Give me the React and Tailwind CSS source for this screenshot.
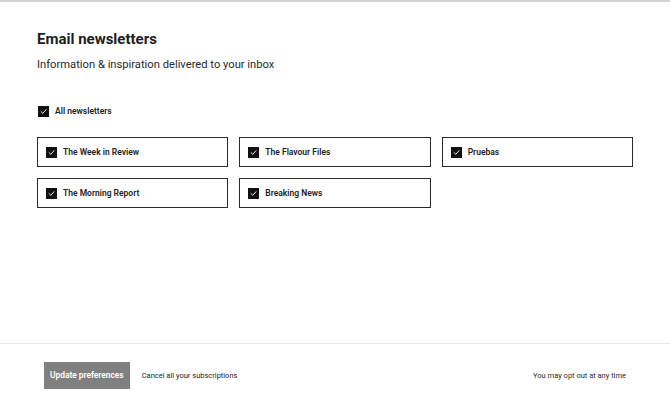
import React, { useState } from 'react';

const newsletters = [
    'The Week in Review',
    'The Flavour Files',
    'Pruebas',
    'The Morning Report',
    'Breaking News',
];

const Check = ({ checked }) => (
    <span className="flex h-[11px] w-[11px] shrink-0 items-center justify-center bg-[#111]">
        {checked && (
            <svg width="7" height="7" viewBox="0 0 10 10" fill="none">
                <path d="M1.5 5.2 L4 7.6 L8.6 2.4" stroke="#fff" strokeWidth="1.3" strokeLinecap="round" strokeLinejoin="round" />
            </svg>
        )}
    </span>
);

const App = () => {
    const [selected, setSelected] = useState(newsletters.map(() => true));
    const allChecked = selected.every(Boolean);

    const toggle = (i) => {
        setSelected(prev => prev.map((v, j) => (j === i ? !v : v)));
    };

    return (
        <div className="flex h-[407px] w-[670px] flex-col border-t-2 border-[#d4d4d4] bg-white text-[#1d1d1d] font-['Roboto',sans-serif]">
            <div className="flex-1 px-[37px] pt-[28px]">
                <h1 className="text-[15px] leading-[18px] font-bold">Email newsletters</h1>
                <p className="mt-[10px] text-[11.2px] leading-[14px] text-[#2a2a2a]">Information &amp; inspiration delivered to your inbox</p>

                <button
                    onClick={() => setSelected(newsletters.map(() => !allChecked))}
                    className="mt-[34px] ml-px flex items-center gap-[6px] text-[8.5px] leading-[11px] font-semibold"
                >
                    <Check checked={allChecked} />
                    All newsletters
                </button>

                <div className="mt-[20px] grid grid-cols-3 gap-x-[11px] gap-y-[11px]">
                    {newsletters.map((name, i) => (
                        <button
                            key={name}
                            onClick={() => toggle(i)}
                            className="flex h-[30px] items-center gap-[6px] border border-[#2b2b2b] px-[8px] text-left text-[8.5px] font-semibold"
                        >
                            <Check checked={selected[i]} />
                            {name}
                        </button>
                    ))}
                </div>
            </div>

            <div className="flex h-[64px] items-center border-t border-[#e8e8e8] px-[44px] text-[7.5px]">
                <button className="h-[27px] bg-[#808080] px-[6px] text-[8.4px] font-semibold text-white">Update preferences</button>
                <button className="ml-[12px] text-[#1d1d1d]">Cancel all your subscriptions</button>
                <span className="ml-auto text-[#2a2a2a]">You may opt out at any time</span>
            </div>
        </div>
    );
};

export default App;
